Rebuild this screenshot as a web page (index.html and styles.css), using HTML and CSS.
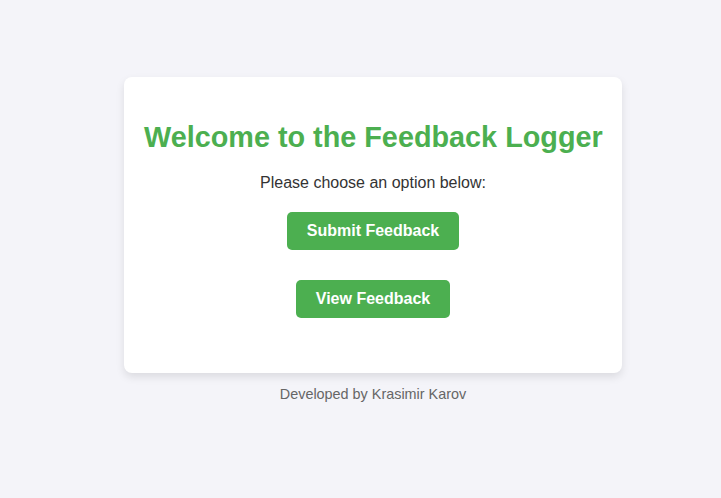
FILE: index.html
```html
<!DOCTYPE html>
<html lang="en">
<head>
<meta charset="utf-8">
<title>Feedback Logger</title>
<link rel="stylesheet" href="styles.css">
</head>
<body>
<div class="page">
  <div class="card">
    <h1 class="title">Welcome to the Feedback Logger</h1>
    <p class="lead">Please choose an option below:</p>
    <div class="actions">
      <a class="btn" href="#">Submit Feedback</a>
      <a class="btn" href="#">View Feedback</a>
    </div>
  </div>
  <footer class="footer">Developed by Krasimir Karov</footer>
</div>
</body>
</html>
```
FILE: styles.css
```css
html, body {
  margin: 0;
  padding: 0;
  background: #f4f4f9;
  font-family: "Liberation Sans", Arial, Helvetica, sans-serif;
  font-size: 16px;
  color: #333;
}
.page {
  display: flex;
  flex-direction: column;
  align-items: center;
  padding: 77px 0 0 25px;
}
.card {
  width: 498px;
  box-sizing: border-box;
  background: #fff;
  border-radius: 8px;
  box-shadow: 0 4px 8px rgba(0, 0, 0, 0.1);
  padding: 25px 20px 25px;
  text-align: center;
}
.title {
  color: #4caf50;
  font-size: 28.8px;
  font-weight: bold;
  margin: 19.3px 0;
  line-height: 33px;
  white-space: nowrap;
}
.lead {
  margin: 19.3px 0 0;
  line-height: 18.4px;
}
.actions {
  display: flex;
  flex-direction: column;
  align-items: center;
  gap: 30px;
  margin: 20px 0 30px;
}
.btn {
  display: block;
  background: #4caf50;
  color: #fff;
  text-decoration: none;
  font-weight: bold;
  font-size: 16px;
  line-height: 18px;
  padding: 10px 20px;
  border-radius: 5px;
}
.footer {
  margin-top: 13px;
  font-size: 14.4px;
  line-height: 16.5px;
  color: #666;
}
```
